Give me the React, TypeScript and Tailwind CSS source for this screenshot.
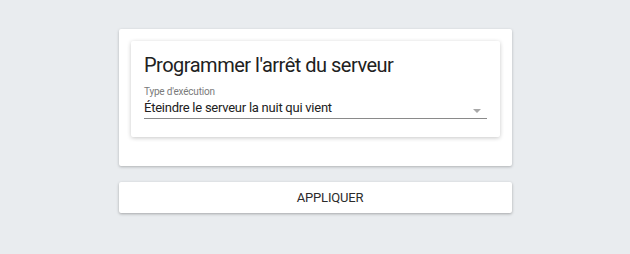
import React from "react";

const App = () => {
  return (
    <div
      className="min-h-screen w-full bg-[#e9ecef] pt-[29px]"
      style={{ fontFamily: "Roboto, 'Liberation Sans', sans-serif" }}
    >
      <div className="w-[393px] ml-[119px]">
        <div className="rounded-[2px] bg-white px-3 pt-[12px] pb-[29px] shadow-[0_1px_3px_rgba(0,0,0,0.25)]">
          <div className="rounded-[2px] bg-white px-[13px] pt-[11px] pb-[18px] shadow-[0_1px_4px_rgba(0,0,0,0.22)]">
            <h1 className="text-[20px] leading-[26px] tracking-[-0.5px] text-[#212121]">
              Programmer l'arrêt du serveur
            </h1>
            <div className="mt-[8px]">
              <p className="text-[10px] leading-[12px] tracking-[-0.2px] text-[#7a7a7a]">
                Type d'exécution
              </p>
              <div className="mt-[1px] flex items-center justify-between border-b border-[#8a8a8a] pb-[2px]">
                <span className="text-[13px] leading-[17px] tracking-[-0.25px] text-[#212121]">
                  Éteindre le serveur la nuit qui vient
                </span>
                <span className="mr-[6px] mt-[6px] h-0 w-0 border-x-[4px] border-t-[4px] border-x-transparent border-t-[#a8a8a8]" />
              </div>
            </div>
          </div>
        </div>
        <button className="mt-[16px] flex h-[31px] w-full items-center justify-center rounded-[2px] bg-white pl-[29px] text-[13px] tracking-[-0.2px] text-[#2b2b2b] shadow-[0_1px_3px_rgba(0,0,0,0.3)]">
          APPLIQUER
        </button>
      </div>
    </div>
  );
};

export default App;
